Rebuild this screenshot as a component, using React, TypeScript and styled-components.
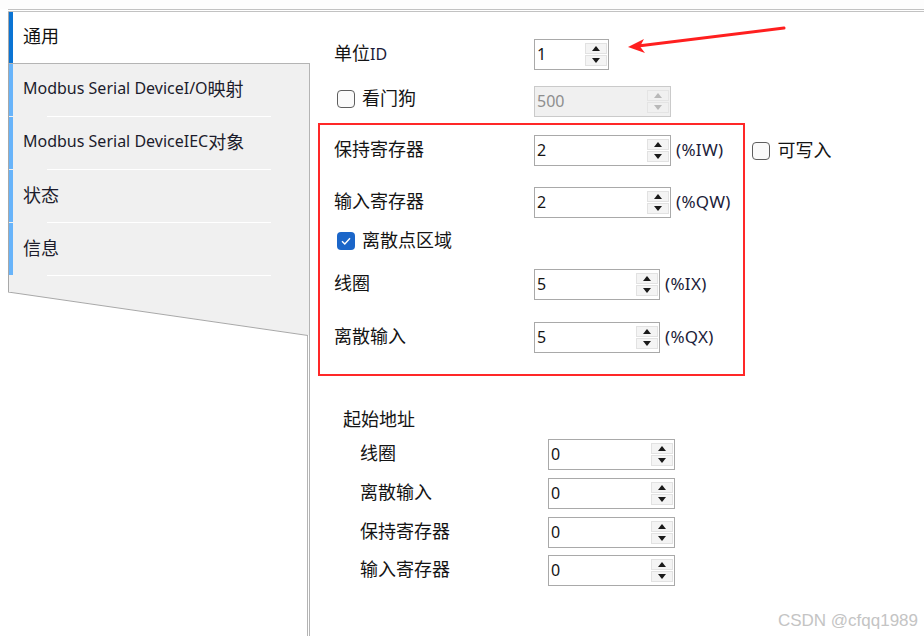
import React from "react";
import styled, { createGlobalStyle } from "styled-components";

const GlobalStyle = createGlobalStyle`
    html, body {
        margin: 0;
        padding: 0;
        background: #ffffff;
    }
    body {
        font-family: "Noto Sans", "Noto Sans CJK SC", sans-serif;
        color: #161616;
    }
`;

const Page = styled.div`
    position: relative;
    width: 924px;
    height: 636px;
    overflow: hidden;
    display: flex;
    flex-direction: column;
    background: #ffffff;
`;

const TopGap = styled.div`
    height: 9px;
    background: #fdfdfd;
`;

const Frame = styled.div`
    flex: 1;
    display: flex;
    margin-left: 8px;
    border-top: 3px double #c2c2c2;
`;

const Sidebar = styled.div`
    width: 302px;
    display: flex;
    flex-direction: column;
`;

const SelectedTab = styled.div`
    position: relative;
    box-sizing: border-box;
    height: 51px;
    display: flex;
    align-items: center;
    padding: 0 0 6px 14px;
    background: #ffffff;
    border-left: 1px solid #a8a8a8;
    font-size: 18px;
    color: #111;

    &::before {
        content: "";
        position: absolute;
        left: 0;
        top: 0;
        bottom: 0;
        width: 4px;
        background: #0a74d4;
    }
`;

const TabList = styled.div`
    background: #f0f0f0;
    border-top: 1px solid #b4b4b4;
    border-left: 1px solid #a8a8a8;
    border-right: 1px solid #b4b4b4;
    padding-bottom: 16px;
`;

const Tab = styled.div`
    position: relative;
    box-sizing: border-box;
    height: 53px;
    display: flex;
    align-items: center;
    padding: 0 0 6px 14px;
    font-size: 16px;
    color: #1c1c2c;
    white-space: nowrap;

    &::before {
        content: "";
        position: absolute;
        left: 0;
        top: 0;
        bottom: 1px;
        width: 4px;
        background: #68b4fa;
    }

    &::after {
        content: "";
        position: absolute;
        left: 38px;
        right: 38px;
        bottom: 0;
        height: 1px;
        background: #ffffff;
    }
`;

const TabCn = styled.span`
    font-size: 18px;
`;

const SlantEdge = styled.svg`
    display: block;
    width: 302px;
    height: 44px;
`;

const SidebarFill = styled.div`
    flex: 1;
    border-right: 3px double #b4b4b4;
`;

const Content = styled.div`
    position: relative;
    flex: 1;
    display: flex;
    flex-direction: column;
`;

const Row = styled.div<{ $top: number; $indent: number }>`
    display: flex;
    align-items: center;
    height: 31px;
    margin-top: ${(p) => p.$top}px;
    padding-left: ${(p) => p.$indent}px;
`;

const Label = styled.div<{ $width: number }>`
    width: ${(p) => p.$width}px;
    padding-bottom: 5px;
    font-size: 18px;
    color: #141414;
    white-space: nowrap;
`;

const Latin = styled.span`
    font-size: 16px;
    color: #1c1c3a;
`;

const Heading = styled.div<{ $top: number }>`
    height: 24px;
    line-height: 22px;
    margin-top: ${(p) => p.$top}px;
    padding-left: 33px;
    font-size: 18px;
    color: #141414;
`;

const SpinBox = styled.div<{ $width: number; $disabled?: boolean }>`
    box-sizing: border-box;
    width: ${(p) => p.$width}px;
    height: 31px;
    display: flex;
    align-items: stretch;
    border: 1px solid ${(p) => (p.$disabled ? "#cacaca" : "#a9a9a9")};
    background: ${(p) => (p.$disabled ? "#f0f0f0" : "#ffffff")};
`;

const SpinValue = styled.div<{ $disabled?: boolean }>`
    flex: 1;
    display: flex;
    align-items: center;
    padding-left: 2px;
    padding-bottom: 1px;
    font-size: 16px;
    color: ${(p) => (p.$disabled ? "#8e8e8e" : "#141414")};
`;

const SpinButtons = styled.div`
    width: 22px;
    display: flex;
    flex-direction: column;
    gap: 1px;
    padding: 3px 1px 3px 0;
`;

const SpinButton = styled.div<{ $disabled?: boolean }>`
    flex: 1;
    display: flex;
    align-items: center;
    justify-content: center;
    background: ${(p) => (p.$disabled ? "#f0f0f0" : "#f4f4f4")};
    border: 1px solid ${(p) => (p.$disabled ? "#e4e4e4" : "#e2e2e2")};
`;

const Suffix = styled.div`
    margin-left: 5px;
    padding-bottom: 3px;
    font-size: 17px;
    letter-spacing: 0.3px;
    color: #1c1c3a;
    white-space: nowrap;
`;

const CheckRow = styled.div<{ $top: number; $indent: number }>`
    display: flex;
    align-items: center;
    gap: 7px;
    height: 20px;
    margin-top: ${(p) => p.$top}px;
    padding-left: ${(p) => p.$indent}px;
    font-size: 18px;
    color: #141414;
`;

const CheckText = styled.span`
    padding-bottom: 4px;
`;

const CheckInline = styled.div`
    display: flex;
    align-items: center;
    gap: 7px;
    margin-left: 29px;
    font-size: 18px;
    color: #141414;
`;

const Box = styled.div<{ $checked?: boolean }>`
    box-sizing: border-box;
    width: 18px;
    height: 18px;
    border-radius: 4px;
    display: flex;
    align-items: center;
    justify-content: center;
    border: ${(p) => (p.$checked ? "none" : "1.5px solid #5e5e5e")};
    background: ${(p) => (p.$checked ? "#1b66c9" : "#fafafa")};
`;

const RedFrame = styled.div`
    position: absolute;
    left: 8px;
    top: 111px;
    width: 427px;
    height: 253px;
    box-sizing: border-box;
    border: 2px solid #ff2828;
    pointer-events: none;
`;

const Arrow = styled.svg`
    position: absolute;
    left: 316px;
    top: 13px;
    width: 162px;
    height: 32px;
    pointer-events: none;
`;

const Watermark = styled.div`
    position: absolute;
    right: 6px;
    bottom: 5px;
    font-family: "Liberation Sans", Arial, sans-serif;
    font-size: 17px;
    color: #c4c4c4;
`;

const Triangle = ({ up, disabled }: { up: boolean; disabled?: boolean }) => (
    <svg width="8" height="5" viewBox="0 0 8 5">
        <polygon points={up ? "0,5 8,5 4,0" : "0,0 8,0 4,5"} fill={disabled ? "#b8b8b8" : "#1a1a1a"} />
    </svg>
);

const Spin = ({ value, width, disabled }: { value: string; width: number; disabled?: boolean }) => (
    <SpinBox $width={width} $disabled={disabled}>
        <SpinValue $disabled={disabled}>{value}</SpinValue>
        <SpinButtons>
            <SpinButton $disabled={disabled}>
                <Triangle up disabled={disabled} />
            </SpinButton>
            <SpinButton $disabled={disabled}>
                <Triangle up={false} disabled={disabled} />
            </SpinButton>
        </SpinButtons>
    </SpinBox>
);

const Check = ({ checked }: { checked?: boolean }) => (
    <Box $checked={checked}>
        {checked && (
            <svg width="12" height="10" viewBox="0 0 12 10">
                <path d="M2 5.2 L4.8 8 L10 2.2" stroke="#ffffff" strokeWidth="1.4" fill="none" />
            </svg>
        )}
    </Box>
);

const tabs = [
    { latin: "Modbus Serial DeviceI/O", cn: "映射" },
    { latin: "Modbus Serial DeviceIEC", cn: "对象" },
    { latin: "", cn: "状态" },
    { latin: "", cn: "信息" },
];

const startRows = [
    { label: "线圈", top: 7 },
    { label: "离散输入", top: 8 },
    { label: "保持寄存器", top: 8 },
    { label: "输入寄存器", top: 7 },
];

export default function App() {
    return (
        <>
            <GlobalStyle />
            <Page>
                <TopGap />
                <Frame>
                    <Sidebar>
                        <SelectedTab>通用</SelectedTab>
                        <TabList>
                            {tabs.map((t) => (
                                <Tab key={t.cn}>
                                    {t.latin}
                                    <TabCn>{t.cn}</TabCn>
                                </Tab>
                            ))}
                        </TabList>
                        <SlantEdge viewBox="0 0 302 44">
                            <polygon points="0,0 302,0 302,43.5 0,0" fill="#f0f0f0" />
                            <line x1="0" y1="0" x2="300" y2="43.5" stroke="#a8a8a8" strokeWidth="1" />
                            <line x1="301.5" y1="0" x2="301.5" y2="44" stroke="#b4b4b4" strokeWidth="1" />
                        </SlantEdge>
                        <SidebarFill />
                    </Sidebar>
                    <Content>
                        <Row $top={27} $indent={24}>
                            <Label $width={200}>
                                单位<Latin>ID</Latin>
                            </Label>
                            <Spin value="1" width={75} />
                        </Row>
                        <Row $top={16} $indent={27}>
                            <Label $width={197}>
                                <CheckRow $top={0} $indent={0}>
                                    <Check />
                                    <CheckText>看门狗</CheckText>
                                </CheckRow>
                            </Label>
                            <Spin value="500" width={137} disabled />
                        </Row>
                        <Row $top={18} $indent={24}>
                            <Label $width={200}>保持寄存器</Label>
                            <Spin value="2" width={137} />
                            <Suffix>(%IW)</Suffix>
                            <CheckInline>
                                <Check />
                                <CheckText>可写入</CheckText>
                            </CheckInline>
                        </Row>
                        <Row $top={21} $indent={24}>
                            <Label $width={200}>输入寄存器</Label>
                            <Spin value="2" width={137} />
                            <Suffix>(%QW)</Suffix>
                        </Row>
                        <CheckRow $top={13} $indent={27}>
                            <Check checked />
                            <CheckText>离散点区域</CheckText>
                        </CheckRow>
                        <Row $top={18} $indent={24}>
                            <Label $width={200}>线圈</Label>
                            <Spin value="5" width={126} />
                            <Suffix>(%IX)</Suffix>
                        </Row>
                        <Row $top={22} $indent={24}>
                            <Label $width={200}>离散输入</Label>
                            <Spin value="5" width={126} />
                            <Suffix>(%QX)</Suffix>
                        </Row>
                        <Heading $top={55}>起始地址</Heading>
                        {startRows.map((r) => (
                            <Row key={r.label} $top={r.top} $indent={50}>
                                <Label $width={188}>{r.label}</Label>
                                <Spin value="0" width={127} />
                            </Row>
                        ))}
                        <RedFrame />
                        <Arrow viewBox="0 0 162 32">
                            <line x1="12" y1="21" x2="158" y2="3" stroke="#ff1f1f" strokeWidth="3" strokeLinecap="round" />
                            <polygon points="2,22 18,14 14,21.5 19,28" fill="#ff1f1f" />
                        </Arrow>
                    </Content>
                </Frame>
                <Watermark>CSDN @cfqq1989</Watermark>
            </Page>
        </>
    );
}
